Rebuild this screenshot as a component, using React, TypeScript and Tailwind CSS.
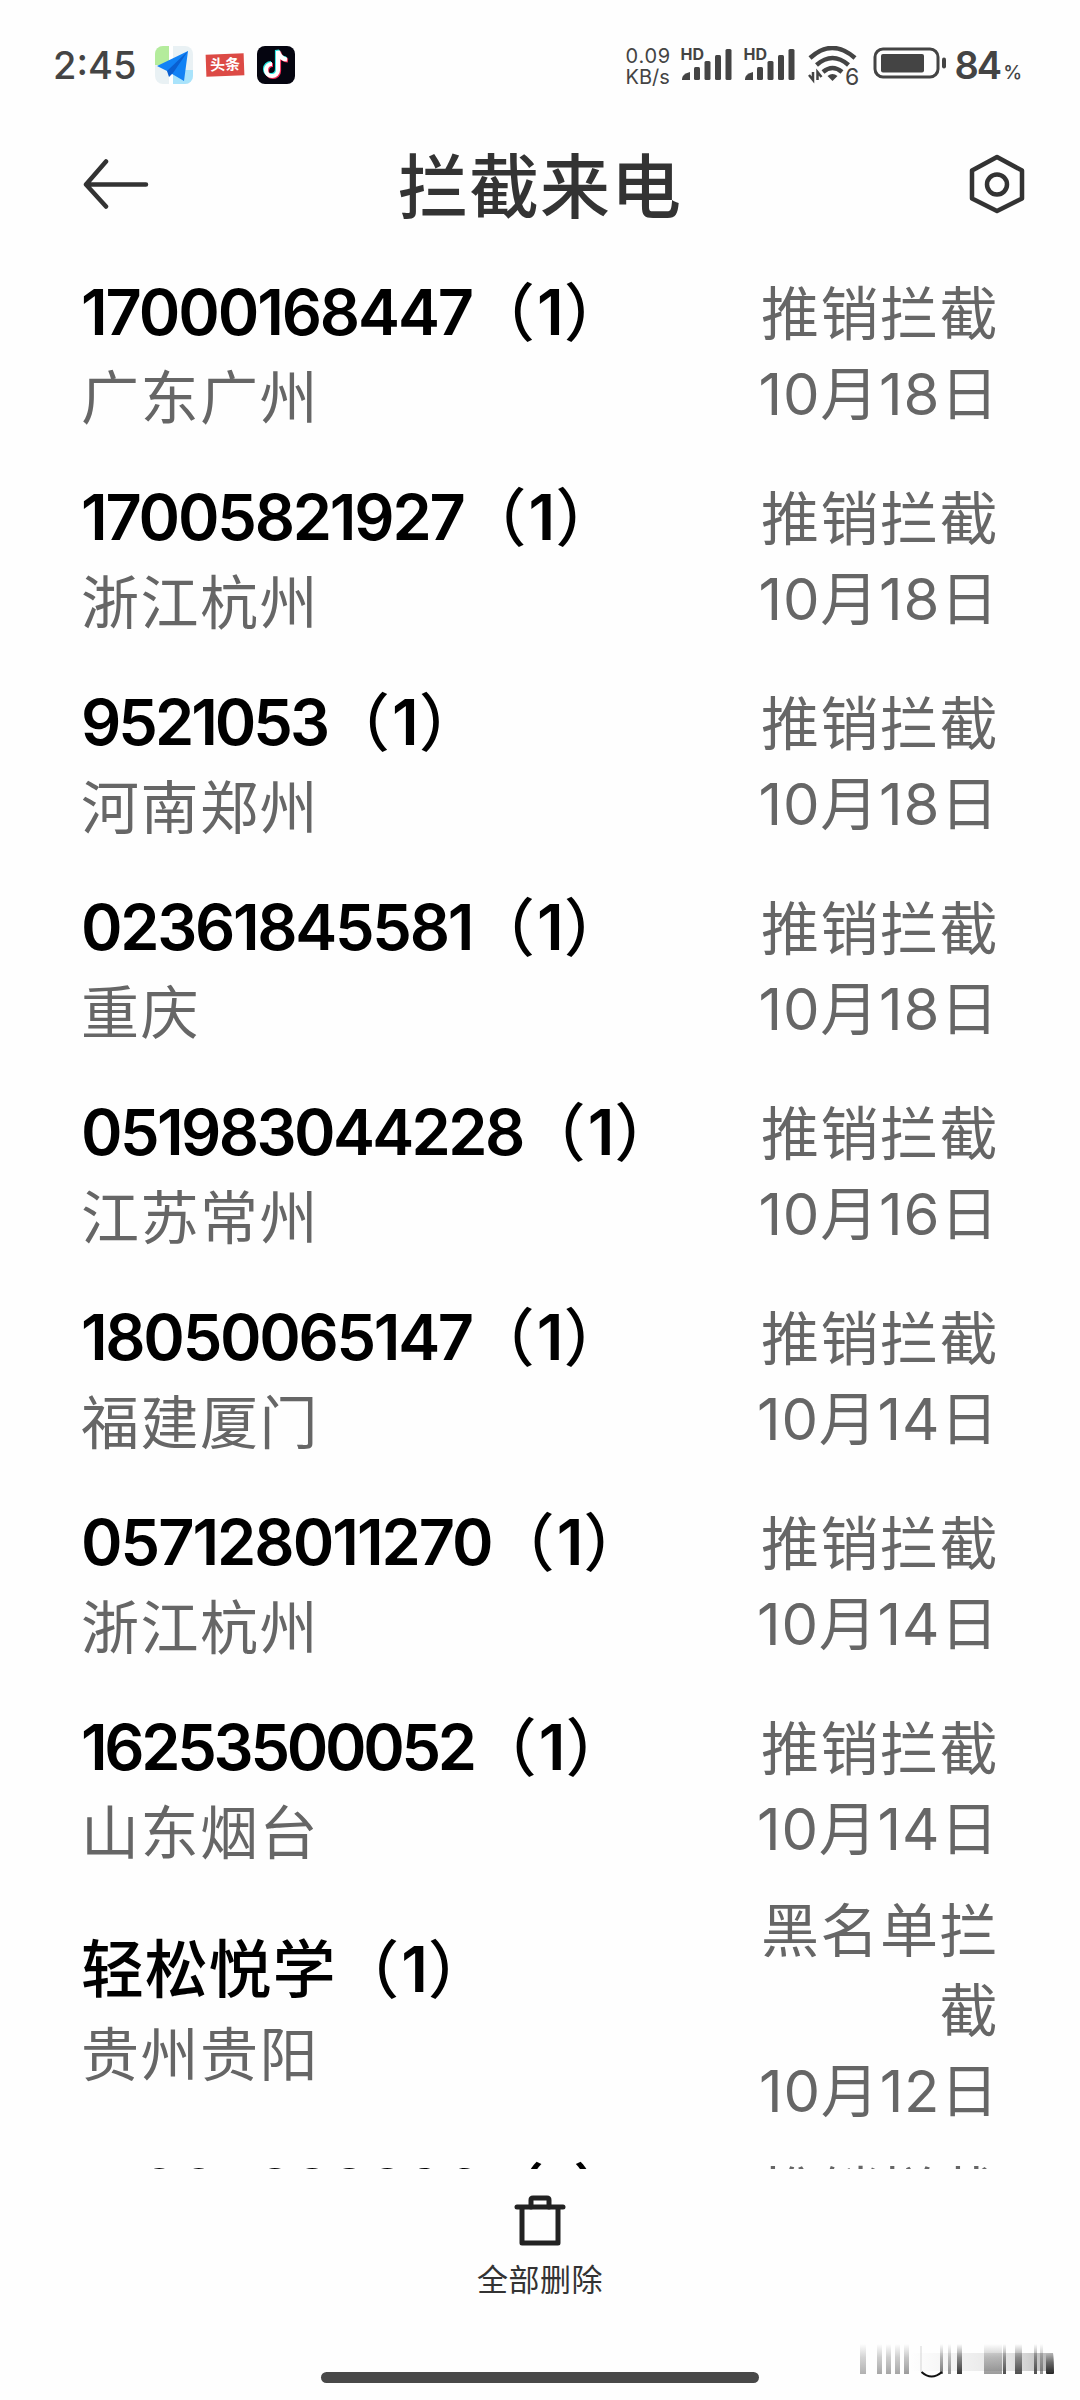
type Call = {
  name: string;
  place: string;
  reason: string;
  date: string;
  tracking: string;
};

const calls: Call[] = [
  { name: "17000168447", place: "广东广州", reason: "推销拦截", date: "10月18日", tracking: "tracking-[-2.1px]" },
  { name: "17005821927", place: "浙江杭州", reason: "推销拦截", date: "10月18日", tracking: "tracking-[-2.2px]" },
  { name: "9521053", place: "河南郑州", reason: "推销拦截", date: "10月18日", tracking: "tracking-[-3px]" },
  { name: "02361845581", place: "重庆", reason: "推销拦截", date: "10月18日", tracking: "tracking-[-2.3px]" },
  { name: "051983044228", place: "江苏常州", reason: "推销拦截", date: "10月16日", tracking: "tracking-[-2.6px]" },
  { name: "18050065147", place: "福建厦门", reason: "推销拦截", date: "10月14日", tracking: "tracking-[-2.3px]" },
  { name: "057128011270", place: "浙江杭州", reason: "推销拦截", date: "10月14日", tracking: "tracking-[-2px]" },
  { name: "16253500052", place: "山东烟台", reason: "推销拦截", date: "10月14日", tracking: "tracking-[-3.3px]" },
  { name: "轻松悦学", place: "贵州贵阳", reason: "黑名单拦截", date: "10月12日", tracking: "tracking-[0.8px]" },
  { name: "17005822896", place: "广东广州", reason: "推销拦截", date: "10月12日", tracking: "tracking-[-2.2px]" },
];

// x, width and opacity of the faded strokes in the bottom-right corner
const strokes = [
  [10, 6, 0.35],
  [27, 5, 0.4],
  [36, 5, 0.4],
  [45, 5, 0.4],
  [54, 5, 0.45],
  [90, 3, 0.6],
  [98, 3, 0.5],
  [107, 5, 0.9],
  [134, 18, 0.45],
  [153, 3, 0.8],
  [165, 7, 0.8],
  [184, 3, 0.8],
  [190, 3, 0.5],
];

function Signal() {
  return (
    <div className="relative h-10 w-[53px]">
      <span className="absolute -top-[2px] left-0 text-[16px] leading-5 font-bold">HD</span>
      <svg viewBox="0 0 53 40" className="h-10 w-[53px]" fill="currentColor">
        <path d="M2 34v-1q0-5 8-7v8z" />
        <rect x="14" y="21" width="6" height="13" rx="1.5" />
        <rect x="24.5" y="15" width="6" height="19" rx="1.5" />
        <rect x="35" y="9" width="6" height="25" rx="1.5" />
        <rect x="45.5" y="3" width="6" height="31" rx="1.5" />
      </svg>
    </div>
  );
}

function StatusBar() {
  return (
    <div className="flex h-[130px] items-start justify-between pr-[58px] pl-[53px] text-[#444]">
      <div className="flex items-center pt-[43px]">
        <span className="w-[102px] text-[38px] leading-[44px] font-medium">2:45</span>
        <svg viewBox="0 0 38 38" className="size-[38px]">
          <defs>
            <clipPath id="nav">
              <rect width="38" height="38" rx="8" />
            </clipPath>
          </defs>
          <g clipPath="url(#nav)">
            <rect width="38" height="38" fill="#e9f1f4" />
            <path d="M0 0h15v19H0z" fill="#b4ec9c" />
            <path d="M18 24h20v14H18z" fill="#a9e3fb" />
            <path d="M14 0h4v38h-4z" fill="#fff" />
          </g>
          <path d="M33 5 2 20l10 5 17 10z" fill="#1182f5" />
          <path d="M33 5 12 25l2 6 4-4z" fill="#0a5fd0" />
        </svg>
        <div className="ml-[13px] flex h-[22px] w-[38px] -rotate-2 items-center justify-center bg-[#dc4a45] text-[15px] font-bold text-white">
          头条
        </div>
        <svg viewBox="0 0 38 38" className="ml-[13px] size-[38px]">
          <rect width="38" height="38" rx="8" fill="#050510" />
          <g fill="none" strokeWidth="4.2">
            <path d="M15 18a6 6 0 1 0 6 6V5c1 5 4 8 9 8.5" stroke="#25e5e0" transform="translate(-1 -1)" />
            <path d="M15 18a6 6 0 1 0 6 6V5c1 5 4 8 9 8.5" stroke="#f5305a" transform="translate(1 1)" />
            <path d="M15 18a6 6 0 1 0 6 6V5c1 5 4 8 9 8.5" stroke="#fff" />
          </g>
        </svg>
      </div>

      <div className="flex items-start pt-[46px]">
        <div className="mr-[10px] w-[45px] text-[20px] leading-[21px]">
          <div className="tracking-[0.8px]">0.09</div>
          <div>KB/s</div>
        </div>
        <Signal />
        <div className="w-[10px]" />
        <Signal />
        <svg viewBox="0 0 52 42" className="ml-[12px] h-[42px] w-[52px]" fill="none" stroke="currentColor" strokeWidth="4.5">
          <path d="M2 12Q24-8 47 12" />
          <path d="M8.5 19Q24.5 5 40.5 19" />
          <path d="M15 26Q24.5 18 34 26" />
          <path d="M19.5 30q5-4 10 0l-5 5z" fill="currentColor" stroke="none" />
          <path d="M5 26v8l-4-5M9.5 34v-8l4 5" strokeWidth="2.5" />
          <text x="37" y="39" fontSize="23" fill="currentColor" stroke="none">
            6
          </text>
        </svg>
        <svg viewBox="0 0 74 34" className="mt-[1px] ml-[13px] h-[34px] w-[74px]">
          <rect x="2" y="2" width="63" height="28" rx="8" fill="none" stroke="currentColor" strokeWidth="3" />
          <rect x="8" y="7" width="43" height="18.5" rx="2" fill="currentColor" />
          <rect x="69" y="10.5" width="4" height="11" rx="2" fill="currentColor" />
        </svg>
        <div className="mt-[-2px] ml-[7px] flex items-baseline">
          <span className="text-[38px] leading-[42px] font-[560] tracking-[-2px]">84</span>
          <span className="ml-[3px] text-[19px] font-medium">%</span>
        </div>
      </div>
    </div>
  );
}

function Header() {
  return (
    <header className="flex h-[121px] items-start justify-between pr-[55px] pl-[83px] text-[#333]">
      <svg viewBox="0 0 66 60" className="mt-[25px] h-[60px] w-[66px]" fill="none" stroke="currentColor" strokeWidth="4.5" strokeLinecap="round" strokeLinejoin="round">
        <path d="M63 29.5H3M23 6.5 3 29.5l20 22" />
      </svg>
      <h1 className="mt-[8px] ml-[-38px] text-[70px] leading-[100px] font-medium tracking-[1px]">拦截来电</h1>
      <svg viewBox="0 0 56 60" className="mt-[24px] h-[60px] w-[56px]" fill="none" stroke="currentColor" strokeWidth="4.5" strokeLinejoin="round">
        <path d="M28 3 53 16.5v28L28 57 3 44.5v-28z" />
        <circle cx="28" cy="30.5" r="10" />
      </svg>
    </header>
  );
}

function CallRow({ call }: { call: Call }) {
  return (
    <li className="flex min-h-[205px] shrink-0 items-center justify-between pr-[81px] pl-[81px]">
      <div className="leading-[84px]">
        <div className="mt-[-2px] mb-[2px] text-[63px] font-[560] whitespace-nowrap text-black">
          <span className={call.tracking}>{call.name}</span>
          <span className="font-['Noto_Sans_CJK_SC'] font-medium">（</span>
          <span className="ml-[2px]">1</span>
          <span className="font-['Noto_Sans_CJK_SC'] font-medium">）</span>
        </div>
        <div className="text-[58px] tracking-[1.5px] text-[#666]">{call.place}</div>
      </div>
      <div className="w-[242px] text-right text-[58px] leading-[80px] tracking-[1.5px] text-[#666]">
        <div>{call.reason}</div>
        <div className="tracking-[0.8px] whitespace-nowrap">{call.date}</div>
      </div>
    </li>
  );
}

function CornerMark() {
  return (
    <svg viewBox="0 0 220 60" className="absolute right-[10px] bottom-[10px] h-[60px] w-[220px]">
      <defs>
        <linearGradient id="fade" x1="0" y1="0" x2="0" y2="1">
          <stop offset="0" stopColor="#333" stopOpacity="0" />
          <stop offset="0.45" stopColor="#333" stopOpacity="0.6" />
          <stop offset="1" stopColor="#222" />
        </linearGradient>
        <linearGradient id="shade" x1="0" y1="0" x2="1" y2="0">
          <stop offset="0" stopColor="#888" stopOpacity="0" />
          <stop offset="0.7" stopColor="#777" stopOpacity="0.25" />
          <stop offset="1" stopColor="#444" stopOpacity="0.5" />
        </linearGradient>
      </defs>
      <rect x="60" y="23" width="143" height="18" fill="url(#shade)" opacity="0.8" />
      {strokes.map(([x, width, opacity]) => (
        <rect key={x} x={x} y="14" width={width} height="30" fill="url(#fade)" opacity={opacity} />
      ))}
      <rect x="196" y="23" width="8" height="21" rx="1" fill="url(#fade)" />
      <path d="M71.5 42q10 9 20.5 0" fill="none" stroke="#111" strokeWidth="2" />
      <path d="M71 16v26" stroke="#999" strokeWidth="1" opacity="0.4" />
    </svg>
  );
}

export default function App() {
  return (
    <main className="relative flex h-[2400px] w-[1080px] flex-col overflow-hidden bg-[#fefefe] font-[Inter,'Noto_Sans_CJK_SC',sans-serif]">
      <StatusBar />
      <Header />
      <ul className="flex h-[1918px] shrink-0 flex-col overflow-hidden">
        {calls.map((call) => (
          <CallRow key={call.name} call={call} />
        ))}
      </ul>

      <footer className="flex grow flex-col items-center text-[#222]">
        <svg viewBox="0 0 52 52" className="mt-[25px] size-[52px]" fill="none" stroke="currentColor" strokeWidth="5" strokeLinecap="round" strokeLinejoin="round">
          <path d="M3 13h46M8 13v36h36V13" />
          <path d="M17 13V6q0-2 2-2h14q2 0 2 2v7" />
        </svg>
        <div className="mt-[12px] text-[31px] leading-[44px] tracking-[0.5px] text-[#333]">全部删除</div>
        <div className="mt-[70px] h-[11px] w-[438px] rounded-full bg-[#484848]" />
      </footer>
      <CornerMark />
    </main>
  );
}
